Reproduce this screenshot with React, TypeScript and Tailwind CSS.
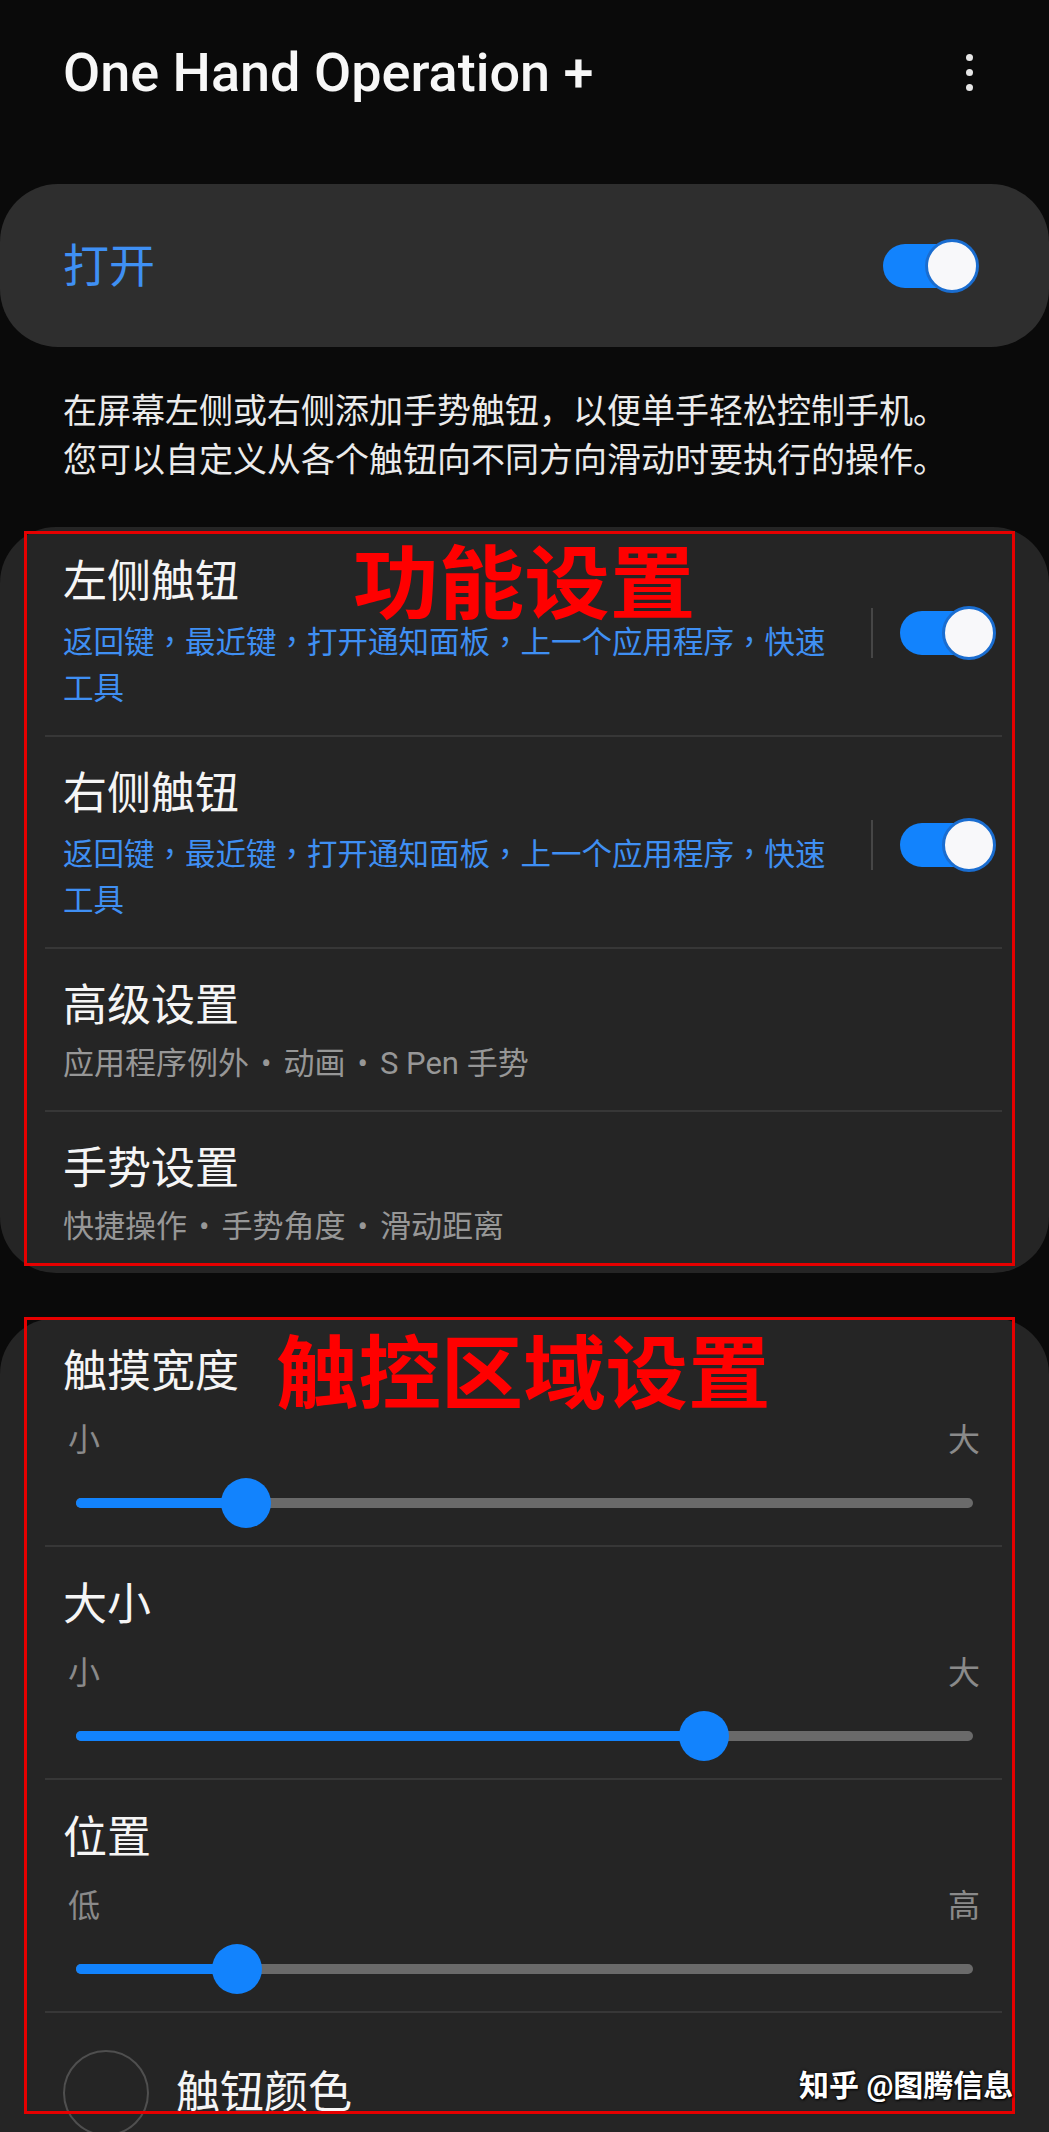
import React from 'react'

const actions = ['返回键', '最近键', '打开通知面板', '上一个应用程序', '快速']

function Toggle() {
  return (
    <div className="relative h-[54px] w-[96px] shrink-0">
      <div className="absolute left-0 top-[5px] h-[44px] w-[90px] rounded-full bg-[#1283fd]" />
      <div className="absolute right-0 top-0 h-[54px] w-[54px] rounded-full border-[3px] border-[#1a6dd0] bg-[#f8f8fa]" />
    </div>
  )
}

function ActionList() {
  return (
    <>
      {actions.map((a, i) => (
        <React.Fragment key={a}>
          {a}
          {i < actions.length - 1 && <span className="font-['Noto_Sans_CJK_TC',sans-serif]">，</span>}
        </React.Fragment>
      ))}
      <br />
      工具
    </>
  )
}

function Dotted({ items }: { items: string[] }) {
  return (
    <>
      {items.map((t, i) => (
        <React.Fragment key={t}>
          {i > 0 && <span className="mx-[12px]">•</span>}
          {t}
        </React.Fragment>
      ))}
    </>
  )
}

function ToggleRow({ title, first }: { title: string; first?: boolean }) {
  return (
    <div className={`flex items-center pl-[63px] pr-[53px] pb-[23px] ${first ? 'pt-[27px]' : 'pt-[29px]'}`}>
      <div className="min-w-0 flex-1">
        <div className="text-[44px] leading-[57px] text-[#f5f5f5]">{title}</div>
        <div className="mt-[6px] text-[30.5px] leading-[46px] text-[#3f8ff3]">
          <ActionList />
        </div>
      </div>
      <div className="ml-[20px] h-[50px] w-[2px] bg-[#464646]" />
      <div className="ml-[27px]">
        <Toggle />
      </div>
    </div>
  )
}

function TextRow({ title, sub }: { title: string; sub: string[] }) {
  return (
    <div className="pl-[63px] pr-[53px] pt-[29px] pb-[23px]">
      <div className="text-[44px] leading-[57px] text-[#f5f5f5]">{title}</div>
      <div className="mt-[6px] text-[31px] leading-[46px] text-[#979797]">
        <Dotted items={sub} />
      </div>
    </div>
  )
}

function Divider() {
  return <div className="ml-[45px] mr-[47px] h-[2px] bg-[#373737]" />
}

function SliderRow({ title, lo, hi, value, first }: { title: string; lo: string; hi: string; value: number; first?: boolean }) {
  return (
    <div className={`pl-[63px] pr-[69px] pb-[12px] ${first ? 'pt-[26px]' : 'pt-[30px]'}`}>
      <div className="text-[44px] leading-[57px] text-[#f5f5f5]">{title}</div>
      <div className="mt-[19px] flex justify-between pl-[5px] text-[32px] leading-[40px] text-[#8a8a8a]">
        <span>{lo}</span>
        <span>{hi}</span>
      </div>
      <div className="relative ml-[13px] mr-[7px] mt-[13px] h-[60px]">
        <div className="absolute left-0 right-0 top-[25px] h-[10px] rounded-full bg-[#6a6a6a]" />
        <div className="absolute left-0 top-[25px] h-[10px] rounded-full bg-[#1283fd]" style={{ width: `${value}%` }} />
        <div
          className="absolute top-[5px] h-[50px] w-[50px] -translate-x-1/2 rounded-full bg-[#1283fd]"
          style={{ left: `${value}%` }}
        />
      </div>
    </div>
  )
}

export default function App() {
  return (
    <div className="relative h-[2132px] w-full overflow-hidden bg-[#0a0a0a] font-['Roboto','Noto_Sans_CJK_SC',sans-serif]">
      <header className="flex h-[184px] items-start justify-between pl-[63px] pr-[76px] pt-[40px]">
        <h1 className="text-[54px] font-medium leading-[66px] text-[#f7f7f7]">One Hand Operation +</h1>
        <div className="mt-[14px] flex flex-col gap-[8px]">
          <span className="h-[7px] w-[7px] rounded-full bg-[#e6e6e6]" />
          <span className="h-[7px] w-[7px] rounded-full bg-[#e6e6e6]" />
          <span className="h-[7px] w-[7px] rounded-full bg-[#e6e6e6]" />
        </div>
      </header>

      <div className="flex h-[163px] items-center justify-between rounded-[58px] bg-[#2e2e2e] pl-[63px] pr-[70px]">
        <span className="text-[46px] leading-[60px] text-[#3f90f4]">打开</span>
        <Toggle />
      </div>

      <div className="px-[63px] pt-[40px] text-[34px] leading-[49px] text-[#ebebeb]">
        <p>在屏幕左侧或右侧添加手势触钮，以便单手轻松控制手机。</p>
        <p>您可以自定义从各个触钮向不同方向滑动时要执行的操作。</p>
      </div>

      <section className="relative mt-[42px] rounded-[56px] bg-[#252525]">
        <ToggleRow title="左侧触钮" first />
        <Divider />
        <ToggleRow title="右侧触钮" />
        <Divider />
        <TextRow title="高级设置" sub={['应用程序例外', '动画', 'S Pen 手势']} />
        <Divider />
        <TextRow title="手势设置" sub={['快捷操作', '手势角度', '滑动距离']} />

        <div className="absolute left-[24px] right-[34px] top-[4px] bottom-[7px] border-[3px] border-[#e60000]" />
        <div className="absolute left-[353px] top-[28px] origin-left scale-x-[1.07] text-[80px] font-bold leading-[60px] text-[#ff0000]">
          功能设置
        </div>
      </section>

      <section className="relative mt-[45px] rounded-[56px] bg-[#252525] pb-[80px]">
        <SliderRow title="触摸宽度" lo="小" hi="大" value={19} first />
        <Divider />
        <SliderRow title="大小" lo="小" hi="大" value={70} />
        <Divider />
        <SliderRow title="位置" lo="低" hi="高" value={18} />
        <Divider />
        <div className="flex items-center pl-[63px] pt-[37px]">
          <div className="h-[86px] w-[86px] rounded-full border-2 border-[#4f4f4f]" />
          <span className="ml-[27px] text-[44px] leading-[57px] text-[#f5f5f5]">触钮颜色</span>
        </div>

        <div className="absolute left-[24px] right-[34px] top-[-1px] h-[797px] border-[3px] border-[#e60000]" />
        <div className="absolute left-[276px] top-[27px] origin-left scale-x-[1.03] text-[80px] font-bold leading-[60px] text-[#ff0000]">
          触控区域设置
        </div>
      </section>

      <div className="absolute left-[799px] top-[2066px] text-[30px] font-bold leading-[40px] text-white [text-shadow:0_0_3px_#000,1px_1px_2px_#000]">
        知乎 @图腾信息
      </div>
    </div>
  )
}
